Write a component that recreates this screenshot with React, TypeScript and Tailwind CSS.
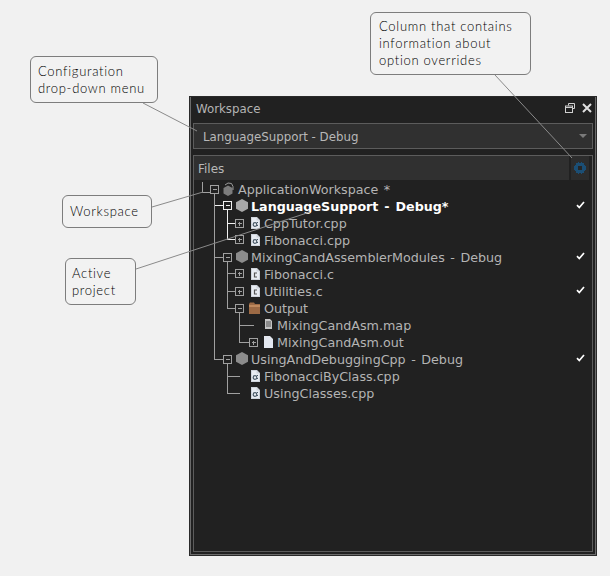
import * as React from "react";

const labelFont = "font-['DejaVu_Sans',sans-serif]";
const noteFont = "font-['Lato',sans-serif]";

type RowKind = "root" | "project" | "cpp" | "c" | "folder" | "map" | "out";

interface TreeRow {
  label: string;
  depth: 0 | 1 | 2 | 3;
  kind: RowKind;
  active?: boolean;
  check?: boolean;
}

const rows: TreeRow[] = [
  { label: "ApplicationWorkspace *", depth: 0, kind: "root" },
  { label: "LanguageSupport - Debug*", depth: 1, kind: "project", active: true, check: true },
  { label: "CppTutor.cpp", depth: 2, kind: "cpp" },
  { label: "Fibonacci.cpp", depth: 2, kind: "cpp" },
  { label: "MixingCandAssemblerModules - Debug", depth: 1, kind: "project", check: true },
  { label: "Fibonacci.c", depth: 2, kind: "c" },
  { label: "Utilities.c", depth: 2, kind: "c", check: true },
  { label: "Output", depth: 2, kind: "folder" },
  { label: "MixingCandAsm.map", depth: 3, kind: "map" },
  { label: "MixingCandAsm.out", depth: 3, kind: "out" },
  { label: "UsingAndDebuggingCpp - Debug", depth: 1, kind: "project", check: true },
  { label: "FibonacciByClass.cpp", depth: 2, kind: "cpp" },
  { label: "UsingClasses.cpp", depth: 2, kind: "cpp" },
];

const depthPad = {
  0: "pl-[29px]",
  1: "pl-[42px]",
  2: "pl-[57px]",
  3: "pl-[70px]",
};

function Hexagon({ color = "#8c8c8c" }: { color?: string }) {
  return (
    <svg width="12" height="13" viewBox="0 0 12 13" className="mb-[2px] shrink-0">
      <path d="M6 0 12 3.200v6.600L6 13 0 9.800V3.200z" fill={color} />
    </svg>
  );
}

function RootIcon() {
  return (
    <svg width="12" height="14" viewBox="0 0 12 14" className="mb-[2px] shrink-0">
      <path d="M5 3.500 9.500 6v5.500L5 14 .5 11.500V6z" fill="#7c7c7c" />
      <path d="M2 3 5 1l3.500.5L10 4.500V8" fill="none" stroke="#9a9a9a" strokeWidth="1" />
    </svg>
  );
}

function FileIcon({ kind }: { kind: RowKind }) {
  if (kind === "folder") {
    return (
      <svg width="11" height="12" viewBox="0 0 11 12" className="-ml-[2px] mb-[2px] shrink-0">
        <path d="M1 .5h4l1 1.500h5v10H0V2z" fill="#9c6a45" />
        <path d="M0 3h11v2H0z" fill="#c08a5e" />
      </svg>
    );
  }
  if (kind === "map") {
    return (
      <svg width="9" height="10" viewBox="0 0 9 10" className="mb-[3px] shrink-0">
        <path d="M1 0h5l2 2v8H1z" fill="#c4c4c4" />
        <path d="M2 3h5M2 5h5M2 7h5" stroke="#555" strokeWidth="1" />
      </svg>
    );
  }
  if (kind === "out") {
    return (
      <svg width="9" height="12" viewBox="0 0 9 12" className="mb-[2px] shrink-0">
        <path d="M0 0h6l3 3v9H0z" fill="#e4e8f0" />
      </svg>
    );
  }
  return (
    <svg width="9" height="12" viewBox="0 0 9 12" className="mb-[2px] shrink-0">
      <path d="M0 0h6l3 3v9H0z" fill="#cfd4dc" />
      <path d="M1 1h4.500v2.500H8V11H1z" fill="#e8ecf2" />
      {kind === "c" ? (
        <path d="M6 5H3.500v4H6" fill="none" stroke="#555" strokeWidth="1.200" />
      ) : (
        <>
          <circle cx="4" cy="7.500" r="1.800" fill="none" stroke="#4a5a68" strokeWidth="1.200" />
          <path d="M6.500 5v1M6.500 8v1" stroke="#4a5a68" strokeWidth="1" />
        </>
      )}
    </svg>
  );
}

function RowIcon({ row }: { row: TreeRow }) {
  if (row.kind === "root") return <RootIcon />;
  if (row.kind === "project") return <Hexagon color={row.active ? "#a8a8a8" : "#8c8c8c"} />;
  return <FileIcon kind={row.kind} />;
}

function Check() {
  return (
    <svg width="9" height="8" viewBox="0 0 9 8" className="mb-[3px] shrink-0">
      <path d="M1 4.200 3.300 6.600 8 1" fill="none" stroke="#fff" strokeWidth="1.700" />
    </svg>
  );
}

// expand / collapse box, x and y are the centre of the box on the tree canvas
function Box({ x, y, open, color }: { x: number; y: number; open?: boolean; color: string }) {
  return (
    <g stroke={color} fill="#212121">
      <rect x={x - 4} y={y - 4} width="8" height="8" />
      <path d={open ? `M${x - 2} ${y}h4` : `M${x - 2} ${y}h4M${x} ${y - 2}v4`} fill="none" />
    </g>
  );
}

// connector lines, canvas origin is the top left of the tree body (194, 180)
function TreeLines() {
  const dim = "#a0a0a0";
  return (
    <svg width="398" height="230" className="absolute left-0 top-0" shapeRendering="crispEdges">
      <g fill="none" stroke={dim}>
        <path d="M8.500 2v10.500H16" />
        <path d="M20.500 13V179.500H29" />
        <path d="M20.500 77.500H29" />
        <path d="M33.500 81V128.500H41M33.500 93.500H42M33.500 111.500H42" />
        <path d="M45.500 132V162.500H55M45.500 145.500H60" />
        <path d="M33.500 183V213.500H46M33.500 196.500H46" />
      </g>
      <path d="M20.500 25.500H30M33.500 29V59.500H42M33.500 43.500H42" fill="none" stroke="#f0f0f0" />
      <Box x={20.5} y={9.5} open color={dim} />
      <Box x={33.5} y={25.5} open color="#f0f0f0" />
      <Box x={45.5} y={43.5} color={dim} />
      <Box x={45.5} y={59.5} color={dim} />
      <Box x={33.5} y={77.5} open color={dim} />
      <Box x={45.5} y={93.5} color={dim} />
      <Box x={45.5} y={111.5} color={dim} />
      <Box x={45.5} y={128.5} open color={dim} />
      <Box x={59.5} y={162.5} color={dim} />
      <Box x={33.5} y={179.5} open color={dim} />
    </svg>
  );
}

function Callout({ className, lines }: { className: string; lines: string[] }) {
  return (
    <div
      className={`absolute rounded-md border border-[#7d7d7d] bg-[#f2f2f2] text-[13px] font-light leading-[17px] tracking-[0.7px] text-black ${noteFont} ${className}`}
    >
      {lines.map((line) => (
        <div key={line}>{line}</div>
      ))}
    </div>
  );
}

function Workspace() {
  return (
    <div className={`ml-[189px] h-[460px] w-[408px] border border-[#2a2a2a] bg-[#212121] ${labelFont}`}>
      <div className="flex h-full flex-col border-x border-b border-[#6b6b6b] px-[2px] pb-[2px]">
        <div className="flex h-[26px] shrink-0 items-center justify-between pl-[3px] pr-[1px]">
          <span className="text-[11.8px] text-[#b4b4b4]">Workspace</span>
          <div className="mb-[4px] flex items-center gap-[7px]">
            <svg width="10" height="10" viewBox="0 0 10 10" fill="none" stroke="#d0d0d0">
              <path d="M3.500 2.500V.5h6v5H7.500" />
              <rect x=".5" y="3" width="7" height="6.500" />
              <path d="M.5 4.500h7" />
            </svg>
            <svg width="10" height="10" viewBox="0 0 10 10" stroke="#e0e0e0" strokeWidth="2">
              <path d="M1 1l8 8M9 1L1 9" />
            </svg>
          </div>
        </div>
        <div className="flex h-[26px] shrink-0 items-center justify-between border border-[#5c5c5c] bg-[#303030] pl-[9px] pr-[5px]">
          <span className="pt-[4px] text-[11.8px] text-[#b8b8b8]">LanguageSupport - Debug</span>
          <span className="h-0 w-0 border-x-[4px] border-t-[4px] border-x-transparent border-t-[#7a7a7a]" />
        </div>
        <div className="mt-[6px] flex min-h-0 flex-1 flex-col border border-[#5c5c5c]">
          <div className="flex h-[24px] shrink-0 pr-[3px]">
            <div className="flex flex-1 items-center bg-[#303030] pl-[4px] pt-[2px] text-[12px] text-[#b8b8b8]">Files</div>
            <div className="ml-[2px] flex w-[18px] items-center justify-center bg-[#2c2c2c]">
              <svg width="12" height="12" viewBox="0 0 12 12" shapeRendering="crispEdges">
                <path
                  d="M4 0h1v1h2V0h1v1h2v2h1v1h1v4h-1v1h-1v2H8v1H7v-1H5v1H4v-1H2V9H1V8H0V4h1V3h1V1h2z"
                  fill="#1b4e74"
                />
                <rect x="4" y="4" width="4" height="4" fill="#262626" />
              </svg>
            </div>
          </div>
          <div className="relative min-h-0 flex-1 pt-[1px]">
            <TreeLines />
            {rows.map((row) => (
              <div key={row.label} className={`relative flex h-[17px] items-center pr-[7px] ${depthPad[row.depth]}`}>
                <RowIcon row={row} />
                <span
                  className={`flex-1 whitespace-nowrap text-[12.7px] [word-spacing:1.5px] ${row.depth > 1 ? "ml-[4px]" : "ml-[3px]"} ${
                    row.active ? "font-bold text-white" : "text-[#b4b4b4]"
                  }`}
                >
                  {row.label}
                </span>
                {row.check && <Check />}
              </div>
            ))}
          </div>
        </div>
      </div>
    </div>
  );
}

export default function App() {
  return (
    <div className="relative h-[576px] w-[610px] overflow-hidden bg-[#f1f1f1] pt-[96px]">
      <Workspace />
      <svg width="610" height="576" className="pointer-events-none absolute left-0 top-0">
        <g stroke="#8a8a8a" strokeWidth="1" fill="none">
          <path d="M143 103 197 131" />
          <path d="M495 75 572 158" />
          <path d="M152 207 203 192" />
          <path d="M136 269 310 212" />
        </g>
      </svg>
      <Callout className="left-[30px] top-[56px] h-[47px] w-[128px] pl-[7px] pt-[6px]" lines={["Configuration", "drop-down menu"]} />
      <Callout className="left-[62px] top-[195px] h-[33px] w-[90px] pl-[7px] pt-[7px]" lines={["Workspace"]} />
      <Callout className="left-[65px] top-[258px] h-[47px] w-[71px] pl-[6px] pt-[6px]" lines={["Active", "project"]} />
      <Callout className="left-[370px] top-[12px] h-[63px] w-[161px] pl-[8px] pt-[5px]" lines={["Column that contains", "information about", "option overrides"]} />
    </div>
  );
}
